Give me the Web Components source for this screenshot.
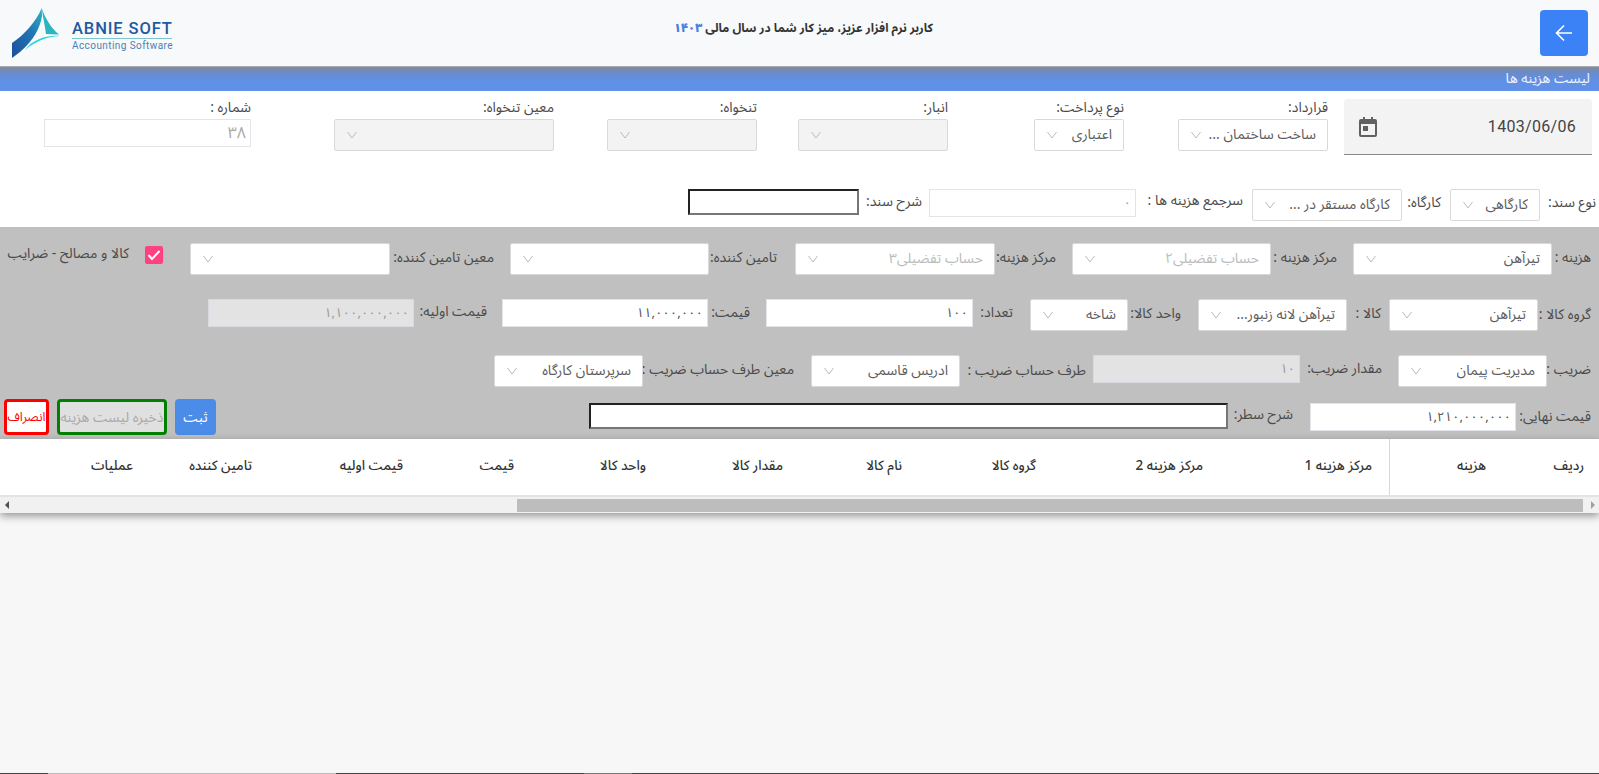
<!DOCTYPE html>
<html lang="fa"><head><meta charset="utf-8"><title>لیست هزینه ها</title>
<style>
html,body{margin:0;padding:0;height:100%;overflow:hidden}
body{background:#f7f7f7;font-family:"Noto Sans Arabic","Noto Sans","DejaVu Sans",sans-serif;font-size:14px;color:#444;display:flex;flex-direction:column}
</style></head><body>
<app-header></app-header>
<title-bar>لیست هزینه ها</title-bar>
<form-top></form-top>
<form-panel></form-panel>
<cost-table></cost-table>
<bottom-strip></bottom-strip>
<script>
const FONT='"Noto Sans Arabic","Noto Sans","DejaVu Sans",sans-serif';
class AppHeader extends HTMLElement{constructor(){super();this.attachShadow({mode:'open'}).innerHTML=`<style>
:host{display:flex;flex:none;height:66px;background:#f8f9fa;direction:ltr;align-items:flex-start;justify-content:space-between;position:relative}
.logo{display:flex;margin:8px 0 0 12px}
.lt{margin:12px 0 0 10px;width:100px}
.a{font:500 16.500px/17px "Roboto",sans-serif;color:#1f5aa0;letter-spacing:.9px;white-space:nowrap;border-bottom:1px solid #7cc6d4;padding-bottom:1px}
.b{font:400 10px/13px "Roboto",sans-serif;color:#4d7fb5;letter-spacing:.42px;white-space:nowrap}
.msg{position:absolute;left:678px;width:255px;top:20px;direction:rtl;text-align:right;font:700 12px/18px ${FONT};color:#333;white-space:nowrap}
.msg b{color:#4a80e0}
button{margin:10px 11px 0 0;width:48px;height:46px;background:#3b82f6;border:0;border-radius:4px;padding:0;display:flex;align-items:center;justify-content:center}
</style>
<div class="logo"><svg width="50" height="52" viewBox="0 0 50 52"><defs><linearGradient id="g" x1="0" y1="1" x2="1" y2="0"><stop offset="0" stop-color="#1b4f9c"/><stop offset=".6" stop-color="#2377b4"/><stop offset="1" stop-color="#2bb5c0"/></linearGradient></defs><path d="M0 35C12 27 24 14 29.700 0L30 8C28 20 22 32 8 44L0 50Z" fill="url(#g)"/><path d="M29.700 0C33 10 39 20 47 26.500L34 26C33 18 31 10 29.700 0Z" fill="#2bb5c0"/><path d="M13 42C20 32 34 27 47.500 28C34 29 24 33 13 42Z" fill="#2bd3dc"/></svg>
<div class="lt"><div class="a">ABNIE SOFT</div><div class="b">Accounting Software</div></div></div>
<div class="msg">کاربر نرم افزار عزیز، میز کار شما در سال مالی <b>۱۴۰۳</b></div>
<button aria-label="back"><svg width="20" height="20" viewBox="0 0 20 20" fill="none" stroke="#fff" stroke-width="1.6"><path d="M18 10H2M10 2.500 2.500 10 10 17.500"/></svg></button>`}}
customElements.define('app-header',AppHeader);
class TitleBar extends HTMLElement{constructor(){super();this.attachShadow({mode:'open'}).innerHTML=`<style>
:host{display:block;flex:none;height:25px;direction:rtl;background:linear-gradient(#7f8ba0 0,#6a8bcb 6px,#6090e8 14px);border-top:1px solid #aaa;box-sizing:border-box;padding:2px 9px 0 0;color:#f1f4fa;font:14px/20px ${FONT};letter-spacing:.5px}
</style><slot></slot>`}}
customElements.define('title-bar',TitleBar);

class XSelect extends HTMLElement{connectedCallback(){const w=this.getAttribute('w'),v=this.getAttribute('value')||'',d=this.hasAttribute('disabled'),m=this.hasAttribute('mute');
this.attachShadow({mode:'open'}).innerHTML=`<style>
:host{display:flex;flex:none;box-sizing:border-box;width:${w}px;height:32px;border:1px solid #d9d9d9;border-radius:2px;background:${d?'#f3f3f3':'#fff'};align-items:center;justify-content:space-between;direction:rtl;padding:0 11px;overflow:hidden}
span{font:14px/30px ${FONT};color:${m?'#bbb':'#5c5c5c'};white-space:nowrap;overflow:hidden}
svg{flex:none}
</style><span>${v}</span><svg width="12" height="8" viewBox="0 0 12 8" fill="none" stroke="#bbb"><path d="M1.500 1 6 7 10.500 1"/></svg>`}}
customElements.define('x-select',XSelect);
class XInput extends HTMLElement{connectedCallback(){const w=this.getAttribute('w'),h=this.getAttribute('h')||28,v=this.getAttribute('value')||'',k=this.getAttribute('kind')||'';
const box=k=='inset'?'border:2px solid;border-color:#222 #767676 #767676 #222;background:#fff':k=='off'?'border:1px solid #d8dae2;background:#e3e3e3':'border:1px solid #e2e4ea;background:#fff';
const col=k=='off'||k=='grey'?'#999':'#555';
this.attachShadow({mode:'open'}).innerHTML=`<style>
:host{display:block;flex:none;box-sizing:border-box;width:${w}px;height:${h}px;${box};direction:rtl;padding:0 4px;font:13px/26px ${FONT};color:${col};letter-spacing:.35px;white-space:nowrap}
</style>${v}`}}
customElements.define('x-input',XInput);
class XField extends HTMLElement{connectedCallback(){const lw=this.getAttribute('lw'),l=this.getAttribute('label'),ly=this.getAttribute('ly')||0;
this.attachShadow({mode:'open'}).innerHTML=`<style>
:host{display:flex;flex:none;direction:rtl;align-items:flex-start}
label{flex:none;width:${lw}px;font:14px/18px ${FONT};color:#4a4a4a;white-space:nowrap;margin-top:${ly}px}
</style><label>${l}</label><slot></slot>`}}
customElements.define('x-field',XField);
class XStack extends HTMLElement{connectedCallback(){const l=this.getAttribute('label');
this.attachShadow({mode:'open'}).innerHTML=`<style>
:host{display:block;flex:none;direction:rtl}
label{display:block;height:20px;font:14px/18px ${FONT};color:#4a4a4a;white-space:nowrap}
</style><label>${l}</label><slot></slot>`}}
customElements.define('x-stack',XStack);

const gap=n=>`<span style="flex:none;width:${n}px"></span>`;
class FormTop extends HTMLElement{constructor(){super();this.attachShadow({mode:'open'}).innerHTML=`<style>
:host{display:block;flex:none;height:136px;background:#fff;box-sizing:border-box;padding-top:8px;direction:rtl}
.r{display:flex;direction:rtl;align-items:flex-start}
.r1{height:90px;padding-right:7px}
.r2{padding-right:3px;}
.date{flex:none;box-sizing:border-box;width:248px;height:56px;background:#f3f3f3;border-bottom:1px solid #888;border-radius:4px 4px 0 0;display:flex;align-items:center;justify-content:space-between;padding:0 16px 0 15px;font:16px "Roboto",sans-serif;letter-spacing:.3px;color:#444;direction:rtl}
.date span{direction:ltr}
</style>
<div class="r r1">
<div class="date"><span>1403/06/06</span><svg width="18" height="20" viewBox="0 0 18 20"><path fill="#616161" fill-rule="evenodd" d="M4 0h2v2h6V0h2v2h2a2 2 0 0 1 2 2v14a2 2 0 0 1-2 2H2a2 2 0 0 1-2-2V4a2 2 0 0 1 2-2h2zM2 7v11h14V7zm2 2h5v5H4z"/></svg></div>
${gap(16)}
<x-stack label="قرارداد:"><x-select w="150" value="ساخت ساختمان ..."></x-select></x-stack>${gap(54)}
<x-stack label="نوع پرداخت:"><x-select w="90" value="اعتباری"></x-select></x-stack>${gap(86)}
<x-stack label="انبار:"><x-select w="150" disabled></x-select></x-stack>${gap(41)}
<x-stack label="تنخواه:"><x-select w="150" disabled></x-select></x-stack>${gap(53)}
<x-stack label="معین تنخواه:"><x-select w="220" disabled></x-select></x-stack>${gap(83)}
<x-stack label="شماره :"><x-input w="207" kind="grey" value="۳۸" style="font-size:16px;color:#aaa"></x-input></x-stack>
</div>
<div class="r r2">
<x-field label="نوع سند:" lw="56" ly="5"><x-select w="90" value="کارگاهی"></x-select></x-field>${gap(9)}
<x-field label="کارگاه:" lw="39" ly="5"><x-select w="150" value="کارگاه مستقر در ..."></x-select></x-field>${gap(9)}
<x-field label="سرجمع هزینه ها :" lw="107" ly="3"><x-input w="207" kind="grey" value="۰"></x-input></x-field>${gap(7)}
<x-field label="شرح سند:" lw="63" ly="4"><x-input w="171" h="26" kind="inset"></x-input></x-field>
</div>`}}
customElements.define('form-top',FormTop);
class FormPanel extends HTMLElement{constructor(){super();this.attachShadow({mode:'open'}).innerHTML=`<style>
:host{display:block;flex:none;height:212px;background:#c0c0c0;box-sizing:border-box;padding:16px 8px 0 0;direction:rtl}
.r{display:flex;direction:rtl;align-items:flex-start;height:56px}
.chk{flex:none;box-sizing:border-box;width:18px;height:18px;margin-top:3px;background:#ff4081;border-radius:2px;display:flex;align-items:center;justify-content:center}
.cl{flex:none;width:120px;font:14px/18px ${FONT};color:#4a4a4a;margin-top:2px;white-space:nowrap}
button{flex:none;box-sizing:border-box;height:36px;border-radius:4px;font:14px ${FONT};padding:0;white-space:nowrap}
.b1{width:41px;background:#4a8ce8;color:#fff;border:0}
.b2{width:110px;background:#e0e0e0;color:#aaa;border:3px solid green}
.b3{width:45px;background:#fff;color:red;border:3px solid red;font-size:12.500px;overflow:hidden}
</style>
<div class="r">
<x-field label="هزینه :" lw="39" ly="6"><x-select w="199" value="تیرآهن"></x-select></x-field>${gap(16)}
<x-field label="مرکز هزینه :" lw="66" ly="6"><x-select w="199" mute value="حساب تفضیلی۲"></x-select></x-field>${gap(16)}
<x-field label="مرکز هزینه:" lw="61" ly="6"><x-select w="200" mute value="حساب تفضیلی۳"></x-select></x-field>${gap(18)}
<x-field label="تامین کننده:" lw="68" ly="6"><x-select w="199"></x-select></x-field>${gap(16)}
<x-field label="معین تامین کننده:" lw="104" ly="6"><x-select w="200"></x-select></x-field>${gap(27)}
<div class="chk"><svg width="14" height="12" viewBox="0 0 14 12" fill="none" stroke="#fff" stroke-width="2"><path d="M1.500 6 5 10 12.500 2"/></svg></div>${gap(16)}
<div class="cl">کالا و مصالح - ضرایب</div>
</div>
<div class="r">
<x-field label="گروه کالا :" lw="53" ly="7"><x-select w="149" value="تیرآهن"></x-select></x-field>${gap(8)}
<x-field label="کالا :" lw="34" ly="6"><x-select w="149" value="تیرآهن لانه زنبور..."></x-select></x-field>${gap(17)}
<x-field label="واحد کالا:" lw="53" ly="6"><x-select w="98" value="شاخه"></x-select></x-field>${gap(17)}
<x-field label="تعداد:" lw="40" ly="5"><x-input w="207" value="۱۰۰"></x-input></x-field>${gap(16)}
<x-field label="قیمت:" lw="42" ly="5"><x-input w="206" value="۱۱,۰۰۰,۰۰۰"></x-input></x-field>${gap(15)}
<x-field label="قیمت اولیه:" lw="73" ly="4"><x-input w="206" kind="off" value="۱,۱۰۰,۰۰۰,۰۰۰"></x-input></x-field>
</div>
<div class="r" style="height:44px">
<x-field label="ضریب :" lw="44" ly="6"><x-select w="149" value="مدیریت پیمان"></x-select></x-field>${gap(16)}
<x-field label="مقدار ضریب:" lw="82" ly="5"><x-input w="207" kind="off" value="۱۰"></x-input></x-field>${gap(7)}
<x-field label="طرف حساب ضریب :" lw="126" ly="7"><x-select w="149" value="ادریس قاسمی"></x-select></x-field>${gap(17)}
<x-field label="معین طرف حساب ضریب :" lw="151" ly="6"><x-select w="149" value="سرپرستان کارگاه"></x-select></x-field>
</div>
<div class="r" style="height:36px">
<x-field label="قیمت نهایی:" lw="75" ly="5" style="margin-top:4px"><x-input w="206" value="۱,۲۱۰,۰۰۰,۰۰۰"></x-input></x-field>${gap(17)}
<x-field label="شرح سطر:" lw="65" ly="3" style="margin-top:4px"><x-input w="639" h="26" kind="inset"></x-input></x-field>${gap(373)}
<button class="b1">ثبت</button>${gap(8)}<button class="b2">ذخیره لیست هزینه</button>${gap(8)}<button class="b3">انصراف</button>
</div>`}}
customElements.define('form-panel',FormPanel);
class CostTable extends HTMLElement{constructor(){super();
const cols=[['ردیف',1584],['هزینه',1486],['مرکز هزینه 1',1372],['مرکز هزینه 2',1203],['گروه کالا',1036],['نام کالا',902],['مقدار کالا',783],['واحد کالا',646],['قیمت',514],['قیمت اولیه',403],['تامین کننده',252],['عملیات',133]];
const cells=cols.map(([t,r],i)=>{const next=i<cols.length-1?cols[i+1][1]:0;return `<div class="c" style="width:${i==0?1599-next:r-next}px;padding-right:${i==0?15:0}px">${t}</div>`}).join('');
this.attachShadow({mode:'open'}).innerHTML=`<style>
:host{display:block;flex:none;background:#fff;box-shadow:0 3px 8px rgba(0,0,0,.4);position:relative;height:74px}
.h{display:flex;direction:rtl;height:56px;border-bottom:2px solid #e3e3e3;position:relative;overflow:hidden}
.c{flex:none;box-sizing:border-box;font:500 13.500px/54px ${FONT};color:#333;white-space:nowrap}
.sepl{position:absolute;left:1389px;top:0;width:1px;height:56px;background:#d8d8d8}
.sb{display:flex;height:16px;background:#f1f1f1;align-items:center}
.arr{flex:none;width:0;height:0;border:4px solid transparent}
.l{border-right-color:#505050;border-left:0;margin-left:5px}
.r{border-left-color:#a0a0a0;border-right:0;margin:0 4px 0 8px}
.t{margin-left:508px;flex:1;height:13px;background:#bdbdbd}
</style>
<div class="h">${cells}<div class="sepl"></div></div>
<div class="sb"><div class="arr l"></div><div class="t"></div><div class="arr r"></div></div>`}}
customElements.define('cost-table',CostTable);
class BottomStrip extends HTMLElement{constructor(){super();this.attachShadow({mode:'open'}).innerHTML=`<style>
:host{display:flex;flex:none;margin-top:auto;height:1px;background:#444}
i{display:block;height:1px}
</style><i style="width:48px"></i><i style="width:288px;background:#bbb"></i><i style="width:248px"></i><i style="width:48px;background:#777"></i>`}}
customElements.define('bottom-strip',BottomStrip);
</script>
</body></html>
